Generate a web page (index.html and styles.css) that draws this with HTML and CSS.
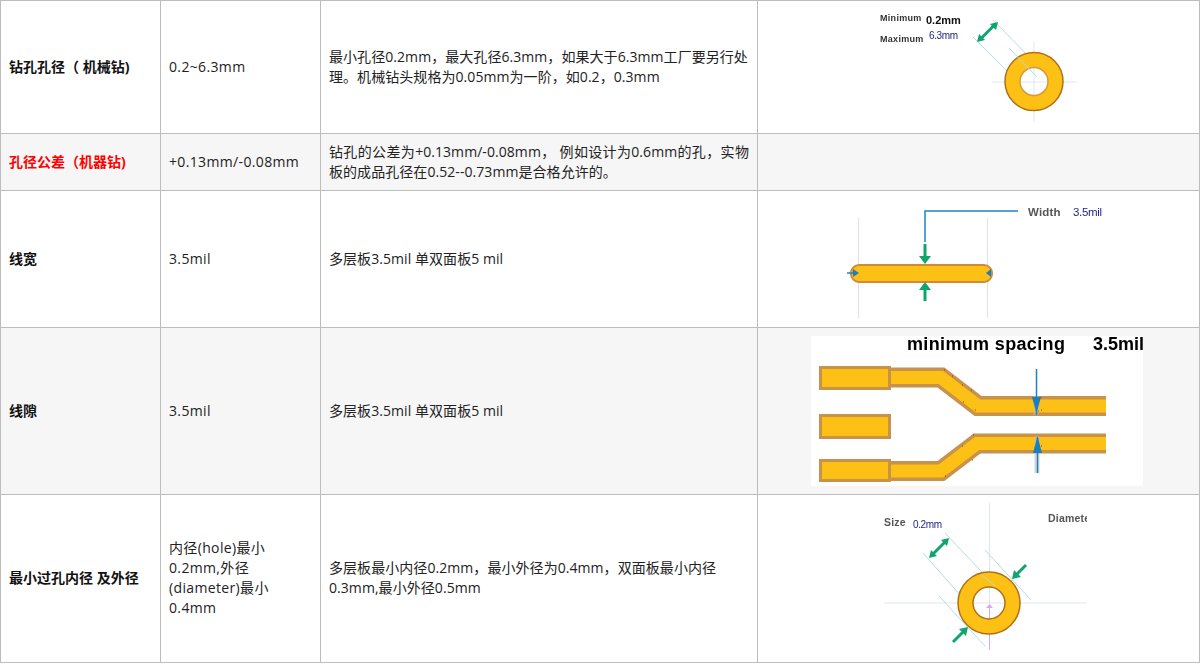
FILE: index.html
```html
<!DOCTYPE html>
<html lang="zh-CN">
<head>
<meta charset="utf-8">
<title>PCB工艺参数</title>
<link rel="stylesheet" href="styles.css">
</head>
<body>
<table class="spec">
<colgroup><col class="c1"><col class="c2"><col class="c3"><col class="c4"></colgroup>
<tbody>
<tr class="r1">
<td class="name">钻孔孔径（ 机械钻)</td>
<td class="range">0.2~6.3mm</td>
<td class="desc">最小孔径0.2mm，最大孔径6.3mm，如果大于6.3mm工厂要另行处理。机械钻头规格为0.05mm为一阶，如0.2，0.3mm</td>
<td class="pic">
<svg class="fig" width="442" height="132" viewBox="758 1 442 132">
<path class="guide" d="M992 82H1077M1034 42V122"/>
<path class="diag" d="M993 20L1037 65M973 37L1018 82"/>
<circle class="pad" cx="1034" cy="81.500" r="21.500" stroke-width="15"/>
<circle class="rim" cx="1034" cy="81.500" r="29"/>
<circle class="rim thin" cx="1034" cy="81.500" r="14"/>
<path class="diag" d="M1009 48L1037 77"/>
<path class="green" d="M981 38.500L994 25.500"/>
<path class="greenhead" d="M977 42L985 40L979 34ZM998 22L990 24L996 30Z"/>
<text class="lbl" x="880" y="21">Minimum</text>
<text class="val" x="926" y="24">0.2mm</text>
<text class="lbl" x="880" y="41.500">Maximum</text>
<text class="blue" x="929" y="39">6.3mm</text>
</svg>
</td>
</tr>
<tr class="r2 alt">
<td class="name red">孔径公差（机器钻)</td>
<td class="range">+0.13mm/-0.08mm</td>
<td class="desc just">钻孔的公差为+0.13mm/-0.08mm， 例如设计为0.6mm的孔，实物板的成品孔径在0.52--0.73mm是合格允许的。</td>
<td class="pic"></td>
</tr>
<tr class="r3">
<td class="name">线宽</td>
<td class="range">3.5mil</td>
<td class="desc">多层板3.5mil 单双面板5 mil</td>
<td class="pic">
<svg class="fig" width="442" height="136" viewBox="758 191 442 136">
<path class="vline" d="M858.500 218V318M987.500 218V318"/>
<rect class="track" x="851" y="265" width="141" height="17" rx="8"/>
<path class="leader" d="M925 242V211H1018"/>
<path class="green" d="M925 244V256M925 301V289"/>
<path class="greenhead" d="M919 256H931L925 264ZM919 290H931L925 282Z"/>
<path class="leader" d="M847 273H853"/>
<path class="bluehead" d="M859 273L853 269V277ZM986 273L991 269V277Z"/>
<text class="lbl big" x="1028" y="216">Width</text>
<text class="blue big" x="1073" y="216">3.5mil</text>
</svg>
</td>
</tr>
<tr class="r4 alt">
<td class="name">线隙</td>
<td class="range">3.5mil</td>
<td class="desc">多层板3.5mil 单双面板5 mil</td>
<td class="pic">
<svg class="fig" width="442" height="166" viewBox="758 328 442 166">
<rect class="paper" x="811" y="336" width="332" height="150"/>
<path class="tr-o" d="M890 377.500H941L978 406H1106M890 471H941L977 443.500H1106"/>
<path class="tr-i" d="M890 377.500H941L978 406H1106M890 471H941L977 443.500H1106"/>
<rect class="block" x="820.500" y="367.500" width="69" height="21"/>
<rect class="block" x="820.500" y="415.500" width="69" height="22"/>
<rect class="block" x="820.500" y="460.500" width="69" height="20"/>
<path class="speck" d="M944 370h1M952 376h1M962 385h1M971 390h1M975 410h1M963 402h1M1041 397v1M1041 410h1M1038 411h1M962 446h1M973 435h1M972 460h1M945 476h1M1041 446h1"/>
<path class="shade" d="M1036 396V415M1037 436V473"/>
<path class="leader" d="M1036.500 369V415M1037.500 437V473"/>
<path class="bluehead" d="M1032 397H1041L1036.500 413ZM1033 453H1042L1037.500 436Z"/>
<text class="head wide" x="907" y="350">minimum spacing</text>
<text class="head" x="1093" y="350">3.5mil</text>
</svg>
</td>
</tr>
<tr class="r5">
<td class="name">最小过孔内径 及外径</td>
<td class="range">内径(hole)最小<br>0.2mm,外径<br>(diameter)最小<br>0.4mm</td>
<td class="desc">多层板最小内径0.2mm，最小外径为0.4mm，双面板最小内径<br>0.3mm,最小外径0.5mm</td>
<td class="pic">
<svg class="fig" width="442" height="167" viewBox="758 495 442 167">
<defs><clipPath id="cut"><rect x="884" y="500" width="203" height="40"/></clipPath></defs>
<path class="guide" d="M884 603H1087M989.500 503V605"/>
<path class="purple" d="M989.500 605V650"/>
<path class="diag" d="M945 533L995 586M923 553L960 595M939 596L985 646M985 550L1031 600"/>
<circle class="pad" cx="989" cy="603" r="23.500" stroke-width="15"/>
<circle class="rim" cx="989" cy="603" r="31"/>
<circle class="rim" cx="989" cy="603" r="16"/>
<path class="diag" d="M982 575L995 586"/>
<path class="purplehead" d="M986 608H993L989.500 604Z"/>
<path class="green" d="M932.500 554.500L945.500 541.500M1026 565L1016 575M953 642L964 631"/>
<path class="greenhead" d="M929 558L937 556L931 550ZM949 538L941 540L947 546ZM1012 579L1014 570L1021 577ZM968 627L966 636L959 629Z"/>
<text class="lbl mid" x="884" y="526">Size</text>
<text class="blue" x="913" y="528">0.2mm</text>
<text class="lbl mid" x="1048" y="522" clip-path="url(#cut)">Diameter</text>
</svg>
</td>
</tr>
</tbody>
</table>
</body>
</html>
```
FILE: styles.css
```css
html, body { margin: 0; padding: 0; background: #fff; }
body {
  font-family: "Open Sans", "Noto Sans CJK SC", sans-serif;
  font-size: 14px;
  line-height: 20px;
  color: #222;
}
.spec {
  border-collapse: collapse;
  table-layout: fixed;
  width: 1200px;
  margin-bottom: 2px;
}
.c1, .c2 { width: 160px; }
.c3 { width: 437px; }
.c4 { width: 442px; }
.spec td {
  border: 1px solid #bdbdbd;
  padding: 8px;
  vertical-align: middle;
  overflow: hidden;
}
.spec td.pic { padding: 0; }
.r1 { height: 133px; }
.r2 { height: 57px; }
.r3 { height: 137px; }
.r4 { height: 167px; }
.r5 { height: 168px; }
.spec .r5 td { padding-bottom: 10px; }
.spec .r5 td.pic { padding-bottom: 0; }
.alt td { background: #f6f6f6; }
.name { font-weight: 700; color: #111; }
.red { color: #f00; }
.range { letter-spacing: .35px; }
.desc { letter-spacing: .06px; }
.just { text-align: justify; }
.fig { display: block; filter: blur(.3px); font-family: "Liberation Sans", sans-serif; }
.fig path, .fig circle { fill: none; }
.guide { stroke: #dfe8ea; stroke-width: 1; }
.diag { stroke: #b5dbe6; stroke-width: 1; }
.vline { stroke: #e2e2e2; stroke-width: 1; }
.fig .pad { stroke: #fdc014; }
.fig .rim { stroke: #b0701a; stroke-width: 1.500; }
.fig .rim.thin { stroke: #d69a3a; stroke-width: 1.500; }
.green { stroke: #0fa56c; stroke-width: 3; }
.fig .greenhead { fill: #0fa56c; }
.leader { stroke: #1c83c6; stroke-width: 1.500; }
.fig .bluehead { fill: #1a7fbe; }
.purple { stroke: #d9a8f0; stroke-width: 1; }
.fig .purplehead { fill: #d9a8f0; }
.track { fill: #fdc014; stroke: #cf8a3a; stroke-width: 2; }
.paper { fill: #fff; }
.block { fill: #fdc014; stroke: #c8924a; stroke-width: 3; }
.fig .tr-o { stroke: #c8924a; stroke-width: 20; stroke-linejoin: miter; }
.fig .tr-i { stroke: #fdc014; stroke-width: 13; stroke-linejoin: miter; }
.speck { stroke: #b22a1a; stroke-width: 1; }
.shade { stroke: #bbb; stroke-width: 5; opacity: .6; }
.lbl { font-size: 9px; font-weight: 700; fill: #333; letter-spacing: .3px; }
.lbl.big { fill: #555; font-size: 11.500px; letter-spacing: .2px; }
.lbl.mid { fill: #555; font-size: 10.500px; letter-spacing: .2px; }
.val { font-size: 11px; font-weight: 700; fill: #111; }
.blue { font-size: 10px; fill: #24248a; letter-spacing: -.4px; }
.blue.big { font-size: 11.500px; letter-spacing: -.3px; }
.head { font-size: 18px; font-weight: 700; fill: #000; }
.head.wide { letter-spacing: .35px; }
```
